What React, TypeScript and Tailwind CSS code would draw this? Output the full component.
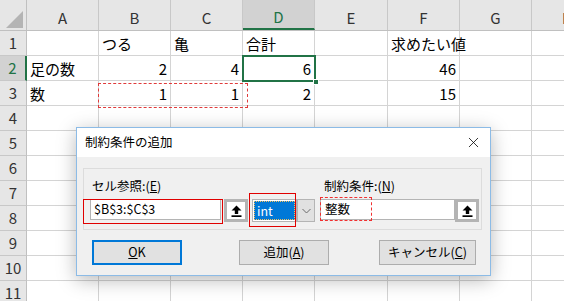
import { X } from 'lucide-react';

const COLS = ['A', 'B', 'C', 'D', 'E', 'F', 'G', 'H'];
const WIDTHS = ['w-[72px]', 'w-[72px]', 'w-[72px]', 'w-[72px]', 'w-[73px]', 'w-[72px]', 'w-[72px]', 'w-[72px]'];

type Cell = { text: string; right?: boolean };

const DATA: Record<number, Record<string, Cell>> = {
  1: { B: { text: 'つる' }, C: { text: '亀' }, D: { text: '合計' }, F: { text: '求めたい値' } },
  2: {
    A: { text: '足の数' },
    B: { text: '2', right: true },
    C: { text: '4', right: true },
    D: { text: '6', right: true },
    F: { text: '46', right: true }
  },
  3: {
    A: { text: '数' },
    B: { text: '1', right: true },
    C: { text: '1', right: true },
    D: { text: '2', right: true },
    F: { text: '15', right: true }
  }
};

const ROWS = [1, 2, 3, 4, 5, 6, 7, 8, 9, 10, 11];

function UpArrowButton() {
  return (
    <div className="w-[24px] h-[23px] border-[3px] border-[#b4b4b4] bg-white flex items-center justify-center">
      <svg width="11" height="12" viewBox="0 0 11 12">
        <path d="M5.5 0.5 L10.5 5.5 L7.2 5.5 L7.2 9 L3.8 9 L3.8 5.5 L0.5 5.5 Z" fill="#000" />
        <rect x="0.5" y="10.3" width="10" height="1.7" fill="#000" />
      </svg>
    </div>
  );
}

function ConstraintDialog() {
  return (
    <div
      className="absolute left-[76px] top-[127px] w-[415px] h-[149px] bg-[#f0f0f0] border border-[#8cbbe6] shadow-[0_4px_18px_rgba(0,0,0,0.28)] flex flex-col"
      style={{ fontFamily: '"Noto Sans CJK JP", "Noto Sans", sans-serif' }}
    >
      <div className="h-[29px] bg-white flex items-center justify-between pl-[8px] pr-[8px]">
        <span className="text-[12.5px] text-black leading-none">制約条件の追加</span>
        <X size={17} strokeWidth={1.1} className="text-black" />
      </div>
      <div className="mt-[11px] ml-[6px] w-[399px] h-[62px] border border-[#dcdcdc] pl-[6px] pt-[9px]">
        <div className="flex text-[12.5px] leading-[16px] text-black">
          <span className="ml-[2px] w-[232px]">
            セル参照:(<span className="underline">E</span>)
          </span>
          <span>
            制約条件:(<span className="underline">N</span>)
          </span>
        </div>
        <div className="flex items-start mt-[5px]">
          <div className="relative w-[131px] h-[21px] bg-white border border-[#b4b4b4] flex items-center pl-[3px] text-[12.5px] text-black">
            $B$3:$C$3
            <div className="absolute -left-[8px] -top-[1px] w-[140px] h-[25px] border border-[#e00000]" />
          </div>
          <div className="ml-[3px]">
            <UpArrowButton />
          </div>
          <div className="relative ml-[4px] flex">
            <div className="w-[45px] h-[23px] bg-white border border-[#b4b4b4] p-[1px]">
              <div className="h-full bg-[#0078d7] border border-dotted border-[#f0c060] text-white text-[12.5px] leading-[17px] pl-[2px]">
                int
              </div>
            </div>
            <div className="w-[18px] h-[23px] bg-[#e1e1e1] border border-[#b4b4b4] flex items-center justify-center">
              <svg width="9" height="6" viewBox="0 0 9 6">
                <path d="M0.5 1 L4.5 5 L8.5 1" fill="none" stroke="#6b6b6b" strokeWidth="1" />
              </svg>
            </div>
            <div className="absolute -left-[3px] -top-[6px] w-[47px] h-[34px] border border-[#e00000]" />
          </div>
          <div className="relative ml-[5px] w-[135px] h-[21px] bg-white border border-[#b4b4b4] flex items-center pl-[4px] text-[12.5px] text-black">
            整数
            <div className="absolute -left-[1px] -top-[3px] w-[52px] h-[24px] border border-dashed border-[#f03030]" />
          </div>
          <UpArrowButton />
        </div>
      </div>
      <div className="flex mt-[10px] ml-[15px] text-[12.5px] text-black">
        <div className="w-[90px] h-[25px] bg-[#e1e1e1] border-2 border-[#0078d7] flex items-center justify-center">
          <span>
            <span className="underline">O</span>K
          </span>
        </div>
        <div className="ml-[57px] w-[90px] h-[25px] bg-[#e1e1e1] border border-[#adadad] flex items-center justify-center">
          <span>
            追加(<span className="underline">A</span>)
          </span>
        </div>
        <div className="ml-[50px] w-[97px] h-[25px] bg-[#e1e1e1] border border-[#adadad] flex items-center justify-center">
          <span>
            キャンセル(<span className="underline">C</span>)
          </span>
        </div>
      </div>
    </div>
  );
}

export default function App() {
  return (
    <div
      className="relative w-[564px] h-[301px] overflow-hidden bg-white text-[#000]"
      style={{ fontFamily: '"Noto Sans CJK JP", "Noto Sans", sans-serif' }}
    >
      {/* column headers */}
      <div className="flex h-[31px] bg-[#e6e6e6] border-b border-[#c0c0c0]">
        <div className="w-[27px] shrink-0 h-full border-r border-[#c0c0c0] flex items-end justify-end pr-[3px] pb-[2px]">
          <svg width="17" height="17" viewBox="0 0 17 17">
            <path d="M17 0 L17 17 L0 17 Z" fill="#b4b4b4" />
          </svg>
        </div>
        {COLS.map((c, i) => (
          <div
            key={c}
            className={`${WIDTHS[i]} shrink-0 h-full flex items-center justify-center pt-[6px] text-[15px] border-r border-[#c8c8c8] ${
              c === 'D' ? 'bg-[#d2d2d2] border-b-2 border-b-[#217346] text-[#217346]' : 'text-[#333]'
            }`}
          >
            {c}
          </div>
        ))}
      </div>

      {/* rows */}
      {ROWS.map((r) => (
        <div key={r} className="flex h-[25px]">
          <div
            className={`w-[27px] shrink-0 h-full border-b border-[#c8c8c8] flex items-center justify-center text-[15px] ${
              r === 2
                ? 'bg-[#d2d2d2] border-r-2 border-r-[#217346] text-[#217346]'
                : 'bg-[#e6e6e6] border-r border-r-[#c0c0c0] text-[#333]'
            }`}
          >
            {r}
          </div>
          {COLS.map((c, i) => {
            const cell = DATA[r]?.[c];
            return (
              <div
                key={c}
                className={`${WIDTHS[i]} shrink-0 h-full border-r border-b border-[#d4d4d4] flex items-center px-[3px] text-[15px] leading-none whitespace-nowrap ${
                  cell?.right ? 'justify-end' : 'justify-start'
                }`}
              >
                {cell?.text}
              </div>
            );
          })}
        </div>
      ))}

      {/* marching ants around B3:C3 */}
      <div className="absolute left-[98px] top-[83px] w-[150px] h-[25px] border border-dashed border-[#e03a3a]" />

      {/* active cell D2 */}
      <div className="absolute left-[242px] top-[55px] w-[74px] h-[27px] border-2 border-[#217346]" />
      <div className="absolute left-[313px] top-[79px] w-[6px] h-[6px] bg-[#217346] border border-white" />

      <ConstraintDialog />
    </div>
  );
}
